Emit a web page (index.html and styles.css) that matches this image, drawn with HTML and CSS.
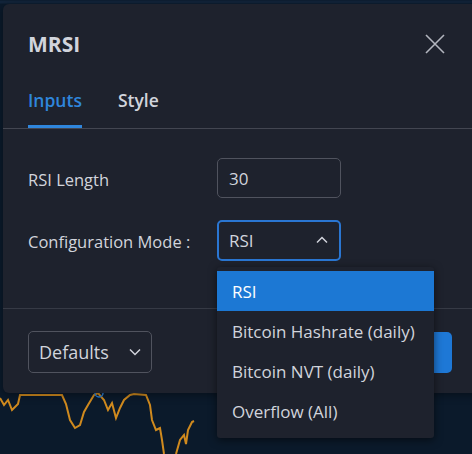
FILE: index.html
```html
<!DOCTYPE html>
<html>
<head>
<meta charset="utf-8">
<link rel="stylesheet" href="styles.css">
</head>
<body>
<div class="chart">
  <svg class="chart-svg" width="472" height="454" viewBox="0 0 472 454">
    <line x1="0" y1="2" x2="472" y2="2" stroke="#12243a" stroke-width="3"/>
    <polyline fill="none" stroke="#d08a1e" stroke-width="2" points="0,398 4,405 8,400 12,410 18,404 20,395 62,395 66,404 70,420 75,428 80,425 84,412 88,405 94,395 98,393 104,400 108,410 112,403 116,418 120,408 124,400 130,395 134,394 146,395 150,405 152,420 156,430 160,428 162,440 164,454"/>
    <polyline fill="none" stroke="#d08a1e" stroke-width="2" points="176,454 180,440 184,435 186,444 188,430 192,422 194,421"/>
    <circle cx="99" cy="393" r="4" fill="none" stroke="#2b7fd8" stroke-width="1.5"/>
  </svg>
</div>

<div class="dialog">
  <div class="header">
    <h1 class="title">MRSI</h1>
    <svg class="close" width="20" height="20" viewBox="0 0 20 20"><path d="M1 1 L19 19 M19 1 L1 19" stroke="#b2b5be" stroke-width="1.6" fill="none"/></svg>
  </div>
  <div class="tabs">
    <div class="tab active">Inputs</div>
    <div class="tab">Style</div>
  </div>
  <div class="content">
    <div class="row">
      <div class="label">RSI Length</div>
      <div class="field">30</div>
    </div>
    <div class="row">
      <div class="label">Configuration Mode :</div>
      <div class="field select">
        <span>RSI</span>
        <svg width="12" height="8" viewBox="0 0 12 8"><path d="M1 6.5 L6 1.5 L11 6.5" stroke="#d1d4dc" stroke-width="1.5" fill="none"/></svg>
      </div>
    </div>
  </div>
  <div class="footer">
    <div class="defaults">
      <span>Defaults</span>
      <svg width="12" height="8" viewBox="0 0 12 8"><path d="M1 1.5 L6 6.5 L11 1.5" stroke="#d1d4dc" stroke-width="1.5" fill="none"/></svg>
    </div>
    <div class="ok"></div>
  </div>
</div>

<div class="menu">
  <div class="item selected">RSI</div>
  <div class="item">Bitcoin Hashrate (daily)</div>
  <div class="item">Bitcoin NVT (daily)</div>
  <div class="item">Overflow (All)</div>
</div>
</body>
</html>
```
FILE: styles.css
```css
html, body {
  margin: 0;
  padding: 0;
}
body {
  width: 472px;
  height: 454px;
  overflow: hidden;
  background: #0b1a2b;
  font-family: "Open Sans", "Noto Sans", sans-serif;
  color: #d1d4dc;
  position: relative;
}
.chart {
  position: absolute;
  inset: 0;
}
.chart-svg {
  display: block;
}
.dialog {
  position: absolute;
  left: 3px;
  top: 4px;
  width: 490px;
  height: 389px;
  background: #1e222d;
  border-radius: 6px 0 0 6px;
  display: flex;
  flex-direction: column;
  box-shadow: 0 2px 8px rgba(0,0,0,0.4);
}
.header {
  height: 66px;
  box-sizing: border-box;
  padding: 14px 0 0 25px;
  display: flex;
  align-items: center;
  justify-content: space-between;
}
.title {
  margin: 0;
  font-size: 21px;
  font-weight: 700;
  color: #d1d4dc;
}
.close {
  margin-right: 48px;
}
.tabs {
  display: flex;
  gap: 36px;
  padding-left: 25px;
  border-bottom: 1px solid #434651;
  height: 59px;
  box-sizing: border-box;
}
.tab {
  font-size: 17.5px;
  font-weight: 600;
  color: #d1d4dc;
  padding-top: 18px;
  box-sizing: border-box;
  height: 58px;
}
.tab.active {
  color: #2f86dc;
  border-bottom: 3px solid #2f86dc;
}
.content {
  padding: 29px 0 0 25px;
  display: flex;
  flex-direction: column;
  gap: 22px;
  height: 180px;
  box-sizing: border-box;
  border-bottom: 1px solid #363a45;
}
.row {
  display: flex;
  align-items: center;
  height: 40px;
}
.label {
  width: 189px;
  font-size: 16.5px;
  padding-top: 2px;
}
.field {
  width: 124px;
  height: 40px;
  box-sizing: border-box;
  border: 1px solid #50535e;
  border-radius: 5px;
  display: flex;
  align-items: center;
  padding: 0 11px;
  font-size: 17px;
}
.field.select {
  border: 2px solid #2a76d2;
  justify-content: space-between;
  padding: 0 11px 0 10px;
  height: 41px;
}
.footer {
  flex: 1;
  display: flex;
  align-items: center;
  padding-left: 25px;
  gap: 230px;
  padding-top: 2px;
}
.defaults {
  width: 124px;
  height: 42px;
  box-sizing: border-box;
  border: 1px solid #50535e;
  border-radius: 5px;
  display: flex;
  align-items: center;
  justify-content: space-between;
  padding: 0 10px 0 10px;
  font-size: 18px;
}
.ok {
  width: 70px;
  height: 41px;
  background: #1e78d6;
  border-radius: 5px;
}
.menu {
  position: absolute;
  left: 217px;
  top: 267px;
  width: 217px;
  padding: 4px 0 7px;
  background: #1e222d;
  border-radius: 3px;
  box-shadow: 0 2px 8px rgba(0,0,0,0.55);
}
.item {
  height: 40px;
  display: flex;
  align-items: center;
  padding-left: 15px;
  font-size: 17px;
  color: #d1d4dc;
}
.item.selected {
  background: #1c78d4;
  color: #ffffff;
}
```
